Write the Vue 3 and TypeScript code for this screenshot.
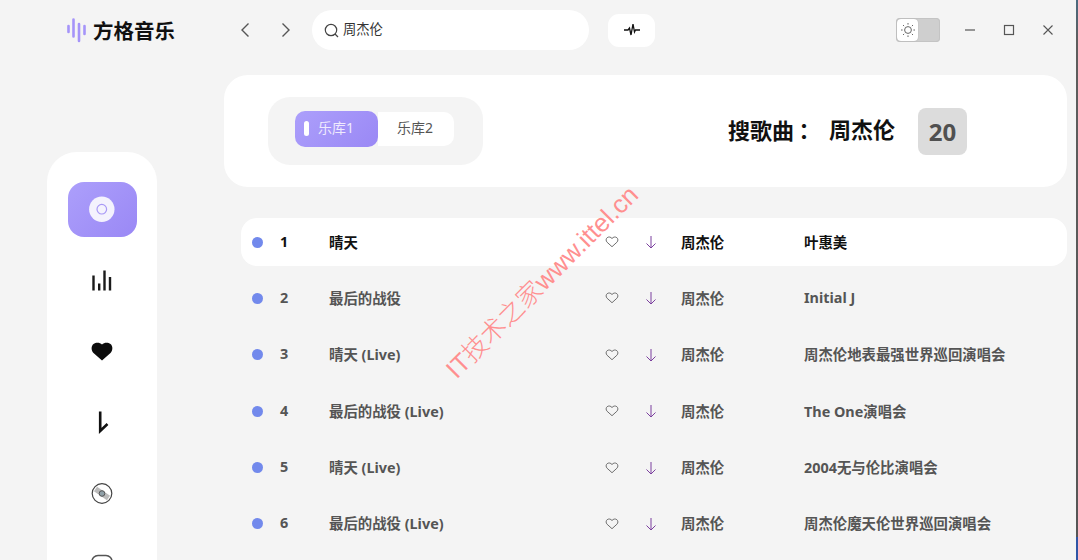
<script setup lang="ts">
interface Song { n: number; title: string; album: string }
const songs: Song[] = [
  { n: 1, title: '晴天', album: '叶惠美' },
  { n: 2, title: '最后的战役', album: 'Initial J' },
  { n: 3, title: '晴天 (Live)', album: '周杰伦地表最强世界巡回演唱会' },
  { n: 4, title: '最后的战役 (Live)', album: 'The One演唱会' },
  { n: 5, title: '晴天 (Live)', album: '2004无与伦比演唱会' },
  { n: 6, title: '最后的战役 (Live)', album: '周杰伦魔天伦世界巡回演唱会' },
]
</script>

<template>
  <div class="app">
    <header class="top">
      <div class="logo">
        <svg width="22" height="26" viewBox="0 0 22 26" fill="none" stroke="#a594f9" stroke-width="2.600" stroke-linecap="round">
          <path d="M2.500 9v6M7.500 2.500v17M13 7v17M18.500 9v8" />
        </svg>
        <span>方格音乐</span>
      </div>
      <button class="nav first" aria-label="back">
        <svg width="12" height="16" viewBox="0 0 12 16" fill="none" stroke="#555" stroke-width="1.400"><path d="M9.500 1.500 3 8l6.500 6.500" /></svg>
      </button>
      <button class="nav" aria-label="forward">
        <svg width="12" height="16" viewBox="0 0 12 16" fill="none" stroke="#555" stroke-width="1.400"><path d="M2.500 1.500 9 8l-6.500 6.500" /></svg>
      </button>
      <div class="search">
        <svg width="15" height="15" viewBox="0 0 15 15" fill="none" stroke="#444" stroke-width="1.200"><circle cx="7" cy="7" r="5.700" /><path d="m11 11 3 3" /></svg>
        <span>周杰伦</span>
      </div>
      <button class="pulse" aria-label="pulse">
        <svg width="18" height="14" viewBox="0 0 18 14" fill="none" stroke="#111" stroke-width="1.300"><path d="M1 7h4l1.500-2 1.500 7 2-11 1.500 8 1-2h4.500" /></svg>
      </button>
      <div class="spacer"></div>
      <div class="toggle">
        <span class="knob">
          <svg width="16" height="16" viewBox="0 0 16 16" fill="none" stroke="#666" stroke-width="1"><circle cx="8" cy="8" r="3.400" /><path d="M8 1v1.600M8 13.400V15M1 8h1.600M13.400 8H15M3 3l1.100 1.100M11.900 11.900 13 13M13 3l-1.100 1.100M4.100 11.900 3 13" /></svg>
        </span>
      </div>
      <div class="win">
        <svg width="12" height="12" viewBox="0 0 12 12" stroke="#555" stroke-width="1.200" fill="none"><path d="M1 6h10" /></svg>
        <svg width="12" height="12" viewBox="0 0 12 12" stroke="#555" stroke-width="1.200" fill="none"><rect x="1.500" y="1.500" width="9" height="9" /></svg>
        <svg width="12" height="12" viewBox="0 0 12 12" stroke="#555" stroke-width="1.100" fill="none"><path d="m1.500 1.500 9 9M10.500 1.500l-9 9" /></svg>
      </div>
    </header>

    <div class="body">
      <aside class="side">
        <div class="side-item active">
          <svg width="28" height="28" viewBox="0 0 28 28"><circle cx="13.800" cy="13.200" r="12.700" fill="#f4f2fd" /><circle cx="13.800" cy="13.200" r="4.800" fill="none" stroke="#a898f6" stroke-width="1.200" /></svg>
        </div>
        <div class="side-item">
          <svg width="22" height="22" viewBox="0 0 22 22" fill="none" stroke="#1a1a1a" stroke-width="2.400"><path d="M2.500 5.500v15M8.200 13.500v7M13.500.5v20M19 7v13.500" /></svg>
        </div>
        <div class="side-item">
          <svg width="24" height="22" viewBox="0 0 24 22"><path d="M12 19.500 3.500 12C1 9.500 1 5 3.500 3 6 1 9.800 1.200 12 3.500c2.200-2.300 6-2.500 8.500-.5 2.500 2 2.500 6.500 0 9Z" fill="#0c0c0c" /></svg>
        </div>
        <div class="side-item">
          <svg width="14" height="24" viewBox="0 0 14 24" fill="none" stroke="#111" stroke-width="2.600"><path d="M5.200 .5V20l7.300-7" /></svg>
        </div>
        <div class="side-item">
          <svg width="22" height="23" viewBox="0 0 22 23"><path d="M4.500 7 17.500 16" stroke="#bbb" stroke-width="5.500" fill="none" /><circle cx="11" cy="11.500" r="9.800" fill="none" stroke="#444" stroke-width="1.200" /><circle cx="11" cy="11.500" r="2.800" fill="#8fa0a8" stroke="#555" /></svg>
        </div>
        <div class="side-item">
          <svg width="22" height="22" viewBox="0 0 22 22" fill="none" stroke="#555" stroke-width="1.600"><rect x="1" y="1.500" width="20" height="20" rx="6" /></svg>
        </div>
      </aside>

      <main class="main">
        <section class="panel">
          <div class="tabs">
            <div class="tab on"><i></i>乐库1</div>
            <div class="tab off">乐库2</div>
          </div>
          <div class="spacer"></div>
          <h1 class="heading"><span>搜歌曲<span class="colon">：</span></span><span>周杰伦</span></h1>
          <div class="count">20</div>
        </section>

        <ul class="list">
          <li v-for="s in songs" :key="s.n" class="row" :class="{ current: s.n === 1 }">
            <span class="dot"></span>
            <span class="num">{{ s.n }}</span>
            <span class="title">{{ s.title }}</span>
            <svg class="heart" width="14" height="12" viewBox="0 0 16 14" fill="none" stroke="#666" stroke-width="1.100"><path d="M8 12.500 2.300 7.300C.7 5.700.8 3.300 2.300 2c1.800-1.400 4.300-1 5.700 1 1.400-2 3.900-2.400 5.700-1 1.500 1.300 1.600 3.700 0 5.300Z" /></svg>
            <svg class="arrow" width="12" height="14" viewBox="0 0 12 14" fill="none" stroke="#7b3f9e" stroke-width="1"><path d="M6 1v12M1.500 8.500 6 13l4.500-4.500" /></svg>
            <span class="singer">周杰伦</span>
            <span class="album">{{ s.album }}</span>
          </li>
        </ul>
      </main>
    </div>

    <div class="mark">IT技术之家www.ittel.cn</div>
    <div class="edge"></div>
  </div>
</template>

<style>
html, body { margin: 0; background: #f4f4f4; }
</style>

<style scoped>
.app {
  position: relative;
  width: 1078px;
  height: 560px;
  overflow: hidden;
  background: #f4f4f4;
  font-family: "Noto Sans", "Noto Sans CJK SC", sans-serif;
}
button { border: 0; padding: 0; background: none; display: flex; align-items: center; justify-content: center; }
.spacer { flex: 1; }

.top { height: 75px; padding: 0 24px 15px 66px; box-sizing: border-box; display: flex; align-items: center; }
.logo { width: 161px; display: flex; align-items: center; gap: 5px; font-size: 20.500px; font-weight: 700; color: #111; }
.nav { width: 41px; height: 20px; justify-content: flex-start; padding-left: 12px; box-sizing: border-box; }
.search {
  width: 277px; height: 40px; margin-left: 3px; background: #fff; border-radius: 20px;
  display: flex; align-items: center; gap: 4px; padding-left: 12px; box-sizing: border-box;
  font-size: 13.300px; color: #333; line-height: 1;
}
.search span { margin-top: -1px; }
.pulse { width: 47px; height: 33px; margin-left: 19px; background: #fff; border-radius: 11px; }
.toggle { width: 44px; height: 24px; border-radius: 4px; background: #cfcfcf; display: flex; align-items: center; padding-left: 1px; box-sizing: border-box; box-shadow: inset 0 0 0 1px #c4c4c4; }
.knob { width: 21px; height: 22px; background: #fff; border-radius: 4px; display: flex; align-items: center; justify-content: center; box-shadow: 0 0 1px #999; }
.win { display: flex; gap: 27px; margin-left: 24px; }

.body { display: flex; align-items: flex-start; }
.side {
  width: 110px; margin: 77px 0 0 47px; padding: 30px 0; box-sizing: border-box;
  background: #fff; border-radius: 30px; display: flex; flex-direction: column; align-items: center; gap: 16px;
  flex: none;
}
.side-item { width: 69px; height: 55px; display: flex; align-items: center; justify-content: center; flex: none; }
.side-item.active { background: linear-gradient(135deg, #ac9ffb, #9a88f5); border-radius: 16px; }

.main { margin-left: 67px; width: 843px; flex: none; }
.panel {
  height: 112px; background: #fff; border-radius: 24px; padding: 0 100px 0 44px; box-sizing: border-box;
  display: flex; align-items: center;
}
.tabs { width: 215px; height: 68px; background: #f4f4f4; border-radius: 22px; padding: 0 0 4px 27px; box-sizing: border-box; display: flex; align-items: center; }
.tab { display: flex; align-items: center; justify-content: center; font-size: 14px; box-sizing: border-box; line-height: 1; }
.tab.on { width: 83px; height: 36px; background: linear-gradient(135deg, #ac9ffb, #9a88f5); border-radius: 10px; color: #efeafd; gap: 9px; justify-content: flex-start; padding: 0 0 2px 9px; }
.tab.on i { width: 5px; height: 15px; background: #fff; border-radius: 3px; }
.tab.off { width: 76px; height: 34px; background: #fff; border-radius: 0 10px 10px 0; color: #555; padding: 0 2px 2px 0; }
.heading { margin: -3px 0 0; font-size: 22px; font-weight: 700; color: #111; display: flex; gap: 14px; line-height: 1.400; }
.colon { font-family: "Noto Sans CJK TC", sans-serif; margin-left: -1px; }
.count { width: 49px; height: 47px; margin-left: 23px; background: #dcdcdc; border-radius: 8px; display: flex; align-items: center; justify-content: center; font-size: 24px; font-weight: 700; color: #505050; }

.list { list-style: none; margin: 31px 0 0 17px; padding: 0; }
.row {
  height: 48px; margin-bottom: 8.400px; border-radius: 16px; display: flex; align-items: center;
  font-size: 14.400px; font-weight: 700; color: #555;
}
.row.current { background: #fff; color: #111; }
.row span:not(.dot) { margin-top: -2px; }
.dot { width: 11px; height: 11px; margin-left: 11px; border-radius: 50%; background: #7289ec; flex: none; }
.num { width: 49px; margin-left: 17px; flex: none; }
.title { width: 276px; flex: none; }
.heart { margin-right: 26px; flex: none; }
.arrow { margin-right: 24px; flex: none; }
.singer { width: 123px; flex: none; }
.album { flex: none; }

.mark {
  position: absolute; left: 540px; top: 280px; transform: translate(-50%, -50%) rotate(-45deg);
  font-family: "Liberation Sans", "Noto Sans CJK SC", sans-serif; font-size: 25.500px; font-weight: 300; color: #ff8f8f; white-space: nowrap;
  pointer-events: none;
}
.edge {
  position: absolute; top: 0; right: 0; width: 2px; height: 560px;
  background: linear-gradient(#4a6a80 0, #5d5d5d 40px, #555 537px, #2f55a5 537px);
}
</style>
